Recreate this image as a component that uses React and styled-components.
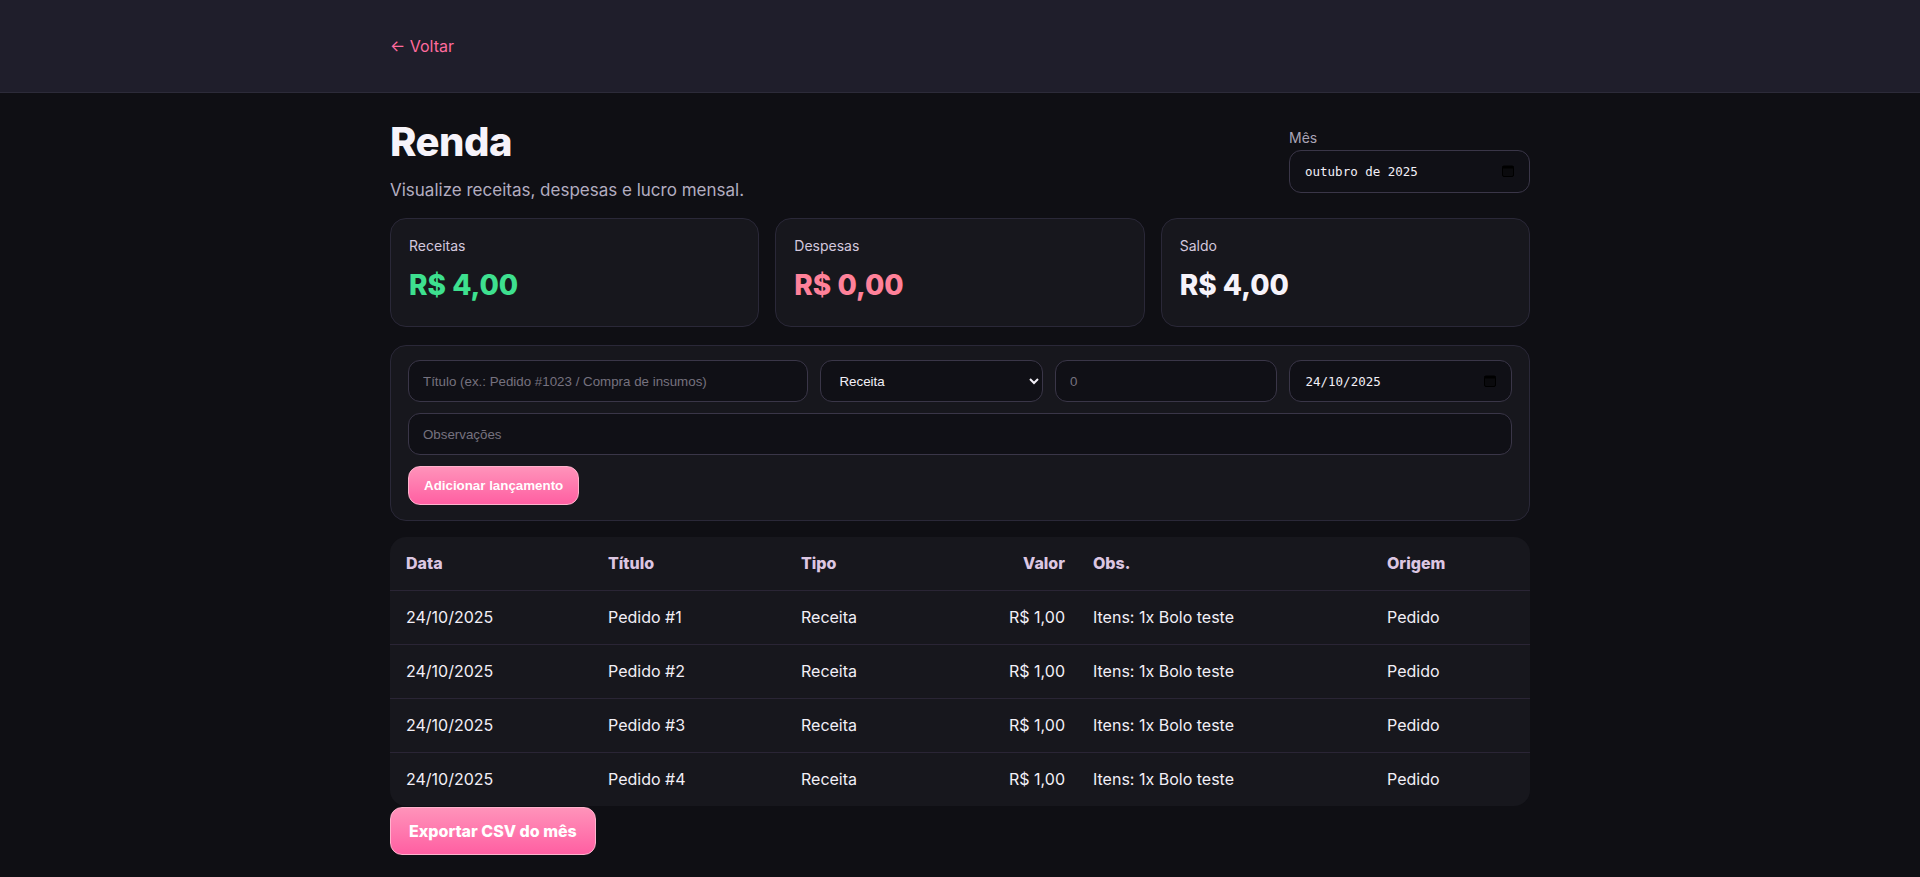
import React from "react";
import styled, { createGlobalStyle } from "styled-components";

const GlobalStyle = createGlobalStyle`
  * { box-sizing: border-box; }
  body {
    margin: 0;
    background: #0f0f14;
    color: #f2eff7;
    font-family: Inter, "Open Sans", sans-serif;
  }
`;

const Header = styled.header`
  background: #1f1e2b;
  border-bottom: 1px solid #2c2b39;
  padding: 34px 0;
`;

const Container = styled.div`
  width: 1140px;
  margin: 0 auto;
`;

const BackLink = styled.a`
  color: #ff6b9d;
  font-size: 16px;
  line-height: 24px;
  text-decoration: none;
  cursor: pointer;
`;

const Main = styled(Container)`
  padding-top: 25px;
`;

const TitleRow = styled.div`
  display: flex;
  justify-content: space-between;
  align-items: center;
`;

const Title = styled.h1`
  margin: 0;
  font-size: 40px;
  line-height: 48px;
  font-weight: 800;
  color: #f6f3fa;
  letter-spacing: -0.5px;
`;

const Subtitle = styled.p`
  margin: 12px 0 0;
  font-size: 17px;
  line-height: 24px;
  color: #b3adc0;
`;

const MonthField = styled.div`
  display: flex;
  flex-direction: column;
  gap: 2px;
  width: 241px;
`;

const SmallLabel = styled.span`
  font-size: 14px;
  line-height: 20px;
  color: #a9a4b6;
`;

const DateBox = styled.label`
  display: flex;
  align-items: center;
  justify-content: space-between;
  height: ${(p) => p.$h || 42}px;
  padding: 0 14px 0 15px;
  background: #101016;
  border: 1px solid #3a3648;
  border-radius: 12px;
  font-family: "DejaVu Sans Mono", "Liberation Mono", monospace;
  font-size: 12.5px;
  color: #f2eff7;
`;

const Cards = styled.div`
  display: grid;
  grid-template-columns: repeat(3, 1fr);
  gap: 16px;
  margin-top: 16px;
`;

const Card = styled.div`
  background: #17171d;
  border: 1px solid #2a2838;
  border-radius: 16px;
  padding: 17px 18px 23px;
`;

const CardLabel = styled.div`
  font-size: 14px;
  line-height: 20px;
  color: #d3c8dd;
`;

const CardValue = styled.div`
  margin-top: 11px;
  font-size: 28px;
  line-height: 36px;
  font-weight: 800;
  color: ${(p) => p.$color};
`;

const FormPanel = styled.div`
  margin-top: 18px;
  background: #17171d;
  border: 1px solid #2a2838;
  border-radius: 16px;
  padding: 14px 17px 15px 17px;
  display: flex;
  flex-direction: column;
  gap: 11px;
`;

const FormRow = styled.div`
  display: grid;
  grid-template-columns: 1.8fr 1fr 1fr 1fr;
  gap: 12px;
`;

const TextInput = styled.input`
  height: 42px;
  width: 100%;
  padding: 0 14px;
  background: #101016;
  border: 1px solid #3a3648;
  border-radius: 12px;
  color: #f2eff7;
  font-family: "Liberation Sans", Arial, sans-serif;
  font-size: 13.33px;
  outline: none;
  &::placeholder { color: #76727f; }
`;

const Select = styled.select`
  height: 42px;
  width: 100%;
  padding: 0 10px 0 14px;
  background: #101016;
  border: 1px solid #3a3648;
  border-radius: 12px;
  color: #f2eff7;
  font-family: "Liberation Sans", Arial, sans-serif;
  font-size: 13.33px;
  outline: none;
`;

const PinkButton = styled.button`
  align-self: flex-start;
  height: ${(p) => (p.$big ? 48 : 39)}px;
  padding: 0 ${(p) => (p.$big ? 18 : 15)}px;
  border: 1px solid #ffb3cd;
  border-radius: 12px;
  background: linear-gradient(180deg, #ff93ba 0%, #ff5fa2 100%);
  color: #ffffff;
  font-family: ${(p) => (p.$big ? 'Inter, "Open Sans", sans-serif' : '"Liberation Sans", Arial, sans-serif')};
  font-size: ${(p) => (p.$big ? 16 : 13.33)}px;
  font-weight: ${(p) => (p.$big ? 800 : 700)};
  cursor: pointer;
`;

const TableCard = styled.div`
  margin-top: 16px;
  background: #17171d;
  border-radius: 16px;
  overflow: hidden;
`;

const Table = styled.table`
  width: 100%;
  border-collapse: collapse;
  table-layout: fixed;
`;

const Th = styled.th`
  padding: 15px ${(p) => (p.$align === "right" ? 12 : 16)}px 15px 16px;
  line-height: 23px;
  font-size: 16px;
  font-weight: 800;
  color: #dcc6e2;
  text-align: ${(p) => p.$align || "left"};
  width: ${(p) => p.$w}px;
`;

const Tr = styled.tr`
  border-top: 1px solid #2a2535;
`;

const Td = styled.td`
  padding: 15px ${(p) => (p.$align === "right" ? 12 : 16)}px 15px 16px;
  line-height: 23px;
  font-size: 16px;
  color: #f2eff7;
  text-align: ${(p) => p.$align || "left"};
  white-space: nowrap;
`;

const Footer = styled.div`
  padding: 1px 0 20px;
  display: flex;
`;

const CalendarIcon = () => (
  <svg width="14" height="14" viewBox="0 0 14 14">
    <rect x="1.5" y="2" width="11" height="10.5" rx="1.5" fill="#0a0a0d" stroke="#000" />
    <rect x="1.5" y="2" width="11" height="2.5" fill="#000" />
  </svg>
);

const columns = [
  { label: "Data", w: 202 },
  { label: "Título", w: 193 },
  { label: "Tipo", w: 152 },
  { label: "Valor", w: 140, align: "right" },
  { label: "Obs.", w: 294 },
  { label: "Origem", w: 159 },
];

const rows = [1, 2, 3, 4].map((n) => ({
  data: "24/10/2025",
  titulo: `Pedido #${n}`,
  tipo: "Receita",
  valor: "R$ 1,00",
  obs: "Itens: 1x Bolo teste",
  origem: "Pedido",
}));

export default function App() {
  return (
    <>
      <GlobalStyle />
      <Header>
        <Container>
          <BackLink>← Voltar</BackLink>
        </Container>
      </Header>
      <Main>
        <TitleRow>
          <div>
            <Title>Renda</Title>
            <Subtitle>Visualize receitas, despesas e lucro mensal.</Subtitle>
          </div>
          <MonthField>
            <SmallLabel>Mês</SmallLabel>
            <DateBox $h={43}>
              <span>outubro de 2025</span>
              <CalendarIcon />
            </DateBox>
          </MonthField>
        </TitleRow>

        <Cards>
          <Card>
            <CardLabel>Receitas</CardLabel>
            <CardValue $color="#3ee08f">R$ 4,00</CardValue>
          </Card>
          <Card>
            <CardLabel>Despesas</CardLabel>
            <CardValue $color="#ff8199">R$ 0,00</CardValue>
          </Card>
          <Card>
            <CardLabel>Saldo</CardLabel>
            <CardValue $color="#f6f3fa">R$ 4,00</CardValue>
          </Card>
        </Cards>

        <FormPanel>
          <FormRow>
            <TextInput placeholder="Título (ex.: Pedido #1023 / Compra de insumos)" />
            <Select defaultValue="receita">
              <option value="receita">Receita</option>
              <option value="despesa">Despesa</option>
            </Select>
            <TextInput placeholder="0" />
            <DateBox>
              <span>24/10/2025</span>
              <CalendarIcon />
            </DateBox>
          </FormRow>
          <TextInput placeholder="Observações" />
          <PinkButton>Adicionar lançamento</PinkButton>
        </FormPanel>

        <TableCard>
          <Table>
            <thead>
              <tr>
                {columns.map((c) => (
                  <Th key={c.label} $w={c.w} $align={c.align}>
                    {c.label}
                  </Th>
                ))}
              </tr>
            </thead>
            <tbody>
              {rows.map((r) => (
                <Tr key={r.titulo}>
                  <Td>{r.data}</Td>
                  <Td>{r.titulo}</Td>
                  <Td>{r.tipo}</Td>
                  <Td $align="right">{r.valor}</Td>
                  <Td>{r.obs}</Td>
                  <Td>{r.origem}</Td>
                </Tr>
              ))}
            </tbody>
          </Table>
        </TableCard>
        <Footer>
          <PinkButton $big>Exportar CSV do mês</PinkButton>
        </Footer>
      </Main>
    </>
  );
}
